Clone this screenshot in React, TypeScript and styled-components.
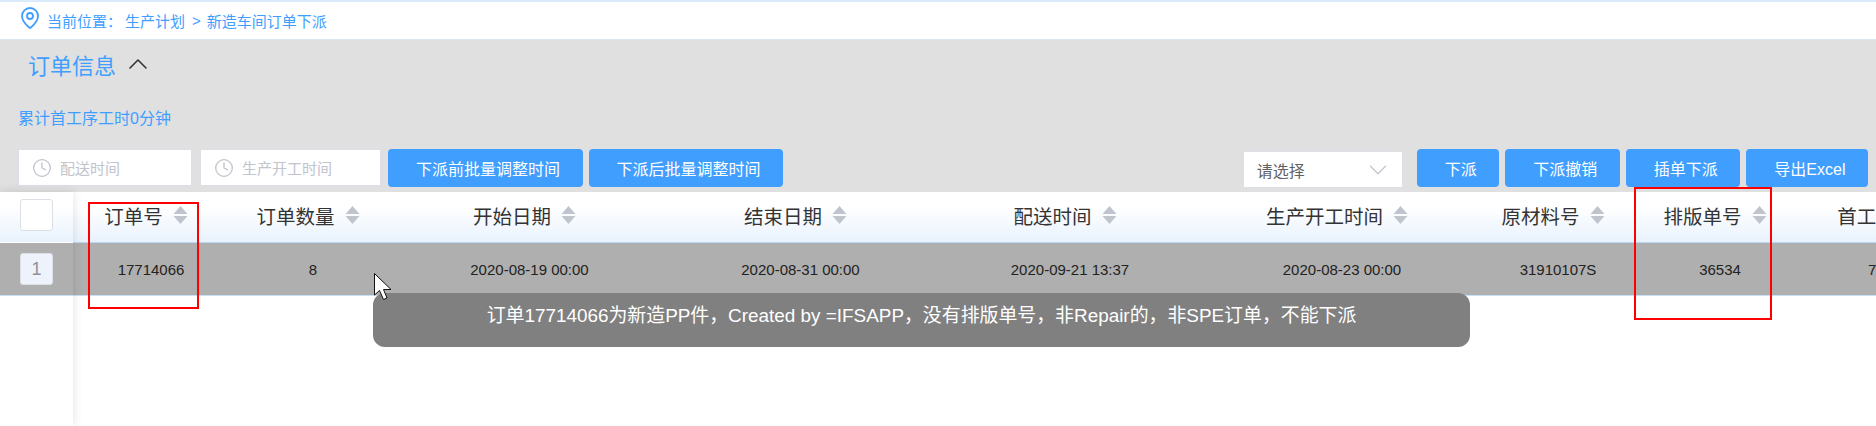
import React from 'react';
import { ChevronDown, ChevronUp, Clock, MapPin } from 'lucide-react';
import styled, { createGlobalStyle } from 'styled-components';

const GlobalStyle = createGlobalStyle`
  html, body {
    margin: 0;
    padding: 0;
    background: #fff;
    overflow: hidden;
  }
  * {
    box-sizing: border-box;
  }
  body {
    font-family: "Liberation Sans", "Noto Sans CJK SC", sans-serif;
  }
`;

const COLUMNS = '156px 168px 265px 277px 262px 282px 150px 174px 193px';

const columns = [
  { title: '订单号', value: '17714066' },
  { title: '订单数量', value: '8' },
  { title: '开始日期', value: '2020-08-19 00:00' },
  { title: '结束日期', value: '2020-08-31 00:00' },
  { title: '配送时间', value: '2020-09-21 13:37' },
  { title: '生产开工时间', value: '2020-08-23 00:00' },
  { title: '原材料号', value: '31910107S' },
  { title: '排版单号', value: '36534' },
  { title: '首工序工时', value: '720.00000' },
];

const Page = styled.div`
  position: relative;
  width: 1876px;
  height: 426px;
  overflow: hidden;
  background: #fff;
`;

const Breadcrumb = styled.div`
  display: flex;
  align-items: center;
  height: 39px;
  padding-left: 18px;
  border-top: 2px solid #dcebfb;
  color: #409eff;
  font-size: 15px;
`;

const PinIcon = styled(MapPin)`
  margin: -6px 5px 0 0;
`;

const CrumbLink = styled.span<{ $gap?: number }>`
  margin-left: ${(p) => p.$gap ?? 0}px;
`;

const Section = styled.section`
  display: flex;
  flex-direction: column;
  height: 153px;
  background: #e0e0e0;
  border-top: 1px solid #d9e6f2;
`;

const TitleRow = styled.div`
  display: flex;
  align-items: center;
  height: 47px;
  padding-left: 28px;
`;

const Title = styled.h2`
  margin: 0;
  color: #409eff;
  font-size: 22px;
  font-weight: 400;
`;

const TitleChevron = styled(ChevronUp)`
  margin-left: 6px;
  color: #333;
`;

const Summary = styled.div`
  height: 24px;
  margin-top: 20px;
  padding-left: 18px;
  color: #409eff;
  font-size: 16px;
  line-height: 24px;
`;

const Toolbar = styled.div`
  display: flex;
  justify-content: space-between;
  margin-top: 18px;
  padding: 0 8px 0 18px;
`;

const ToolGroup = styled.div`
  display: flex;
  align-items: flex-start;
  gap: 6px;
`;

const DateInput = styled.div<{ $width: number; $gap?: number }>`
  display: flex;
  align-items: center;
  gap: 8px;
  width: ${(p) => p.$width}px;
  height: 37px;
  margin-right: ${(p) => p.$gap ?? 0}px;
  padding-left: 13px;
  background: #fff;
  border: 1px solid #dcdfe6;
  color: #c0c4cc;
  font-size: 15px;
`;

const ActionButton = styled.button`
  height: 38px;
  padding: 0 22.5px 0 28px;
  border: none;
  border-radius: 4px;
  background: #409eff;
  color: #fff;
  font-family: inherit;
  font-size: 16px;
  white-space: nowrap;
`;

const SelectBox = styled.div`
  display: flex;
  align-items: center;
  justify-content: space-between;
  width: 160px;
  height: 37px;
  margin: 2px 8px 0 0;
  padding: 0 9px 0 13px;
  background: #fff;
  border: 1px solid #dcdfe6;
  color: #606266;
  font-size: 16px;
`;

const TableArea = styled.div`
  display: flex;
  height: 234px;
`;

const FixedColumn = styled.div`
  position: relative;
  z-index: 1;
  flex: 0 0 73px;
  background: #fff;
  box-shadow: 0 0 10px rgba(0, 0, 0, 0.12);
`;

const FixedHeader = styled.div`
  display: flex;
  align-items: center;
  justify-content: center;
  height: 51px;
  padding-bottom: 4px;
  background: linear-gradient(180deg, #fff 30%, #e8f2fd 100%);
  border-bottom: 1px solid #fff;
`;

const FixedRow = styled.div`
  display: flex;
  align-items: center;
  justify-content: center;
  height: 53px;
  background: #afafaf;
  border-bottom: 1px solid #c5e0f7;
`;

const CheckBox = styled.div`
  width: 33px;
  height: 32px;
  background: #fff;
  border: 1px solid #dcdfe6;
  border-radius: 3px;
`;

const IndexBox = styled(CheckBox)`
  display: flex;
  align-items: center;
  justify-content: center;
  background: #eef2fb;
  color: #909399;
  font-size: 18px;
`;

const TableBody = styled.div`
  flex: 1;
  min-width: 0;
  overflow: hidden;
`;

const HeaderRow = styled.div`
  display: grid;
  grid-template-columns: ${COLUMNS};
  height: 51px;
  background: linear-gradient(180deg, #fff 30%, #e8f2fd 100%);
  border-bottom: 1px solid #b9d9f3;
`;

const HeaderCell = styled.div`
  display: flex;
  align-items: center;
  justify-content: center;
  gap: 10px;
  padding: 0 10px 4px 0;
  color: #333;
  font-size: 19.5px;
  white-space: nowrap;
`;

const DataRow = styled.div`
  display: grid;
  grid-template-columns: ${COLUMNS};
  height: 53px;
  background: #afafaf;
  border-bottom: 1px solid #c5e0f7;
`;

const DataCell = styled.div`
  display: flex;
  align-items: center;
  justify-content: center;
  color: #222;
  font-size: 15px;
  white-space: nowrap;
`;

const Toast = styled.div`
  position: absolute;
  left: 373px;
  top: 293px;
  z-index: 2;
  width: 1097px;
  height: 54px;
  padding-top: 11px;
  border-radius: 12px;
  background: #808080;
  color: #fff;
  font-size: 18.9px;
  line-height: 24px;
  text-align: center;
  white-space: nowrap;
`;

const Cursor = styled.svg`
  position: absolute;
  left: 374px;
  top: 273px;
  z-index: 3;
`;

const Highlight = styled.div<{ $left: number; $top: number; $width: number; $height: number }>`
  position: absolute;
  left: ${(p) => p.$left}px;
  top: ${(p) => p.$top}px;
  z-index: 4;
  width: ${(p) => p.$width}px;
  height: ${(p) => p.$height}px;
  border: 2px solid #f00;
`;

function SortCaret() {
  return (
    <svg width="15" height="18" viewBox="0 0 15 18" fill="#c0c4cc">
      <path d="M7.5 0 L14.5 8 H0.5 Z" />
      <path d="M7.5 18 L14.5 10 H0.5 Z" />
    </svg>
  );
}

export default function App() {
  return (
    <Page>
      <GlobalStyle />
      <Breadcrumb>
        <PinIcon size={24} strokeWidth={1.8} />
        <span>当前位置：</span>
        <CrumbLink $gap={3}>生产计划</CrumbLink>
        <CrumbLink $gap={7}>&gt;</CrumbLink>
        <CrumbLink $gap={6}>新造车间订单下派</CrumbLink>
      </Breadcrumb>

      <Section>
        <TitleRow>
          <Title>订单信息</Title>
          <TitleChevron size={32} strokeWidth={1.2} />
        </TitleRow>
        <Summary>累计首工序工时0分钟</Summary>
        <Toolbar>
          <ToolGroup>
            <DateInput $width={174} $gap={2}>
              <Clock size={20} strokeWidth={1.6} />
              配送时间
            </DateInput>
            <DateInput $width={181} $gap={1}>
              <Clock size={20} strokeWidth={1.6} />
              生产开工时间
            </DateInput>
            <ActionButton>下派前批量调整时间</ActionButton>
            <ActionButton>下派后批量调整时间</ActionButton>
          </ToolGroup>
          <ToolGroup>
            <SelectBox>
              请选择
              <ChevronDown size={30} strokeWidth={1} color="#c0c4cc" />
            </SelectBox>
            <ActionButton>下派</ActionButton>
            <ActionButton>下派撤销</ActionButton>
            <ActionButton>插单下派</ActionButton>
            <ActionButton>导出Excel</ActionButton>
          </ToolGroup>
        </Toolbar>
      </Section>

      <TableArea>
        <FixedColumn>
          <FixedHeader>
            <CheckBox />
          </FixedHeader>
          <FixedRow>
            <IndexBox>1</IndexBox>
          </FixedRow>
        </FixedColumn>
        <TableBody>
          <HeaderRow>
            {columns.map((col) => (
              <HeaderCell key={col.title}>
                {col.title}
                <SortCaret />
              </HeaderCell>
            ))}
          </HeaderRow>
          <DataRow>
            {columns.map((col) => (
              <DataCell key={col.title}>{col.value}</DataCell>
            ))}
          </DataRow>
        </TableBody>
      </TableArea>

      <Toast>订单17714066为新造PP件，Created by =IFSAPP，没有排版单号，非Repair的，非SPE订单，不能下派</Toast>
      <Cursor width="18" height="27" viewBox="0 0 18 27">
        <path d="M0.5 0.5 V22 L5.5 17.5 L9.5 26.5 L13 25 L9.5 16.5 L17 16.5 Z" fill="#fff" stroke="#111" strokeWidth="1" />
      </Cursor>
      <Highlight $left={88} $top={202} $width={111} $height={107} />
      <Highlight $left={1634} $top={187} $width={138} $height={133} />
    </Page>
  );
}
